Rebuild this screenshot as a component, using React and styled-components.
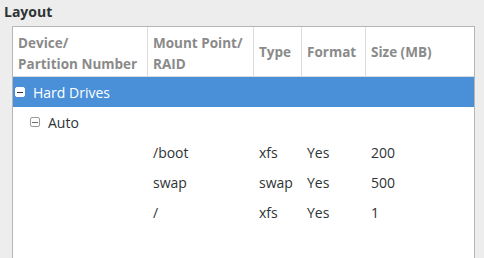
import React from 'react'
import styled, { createGlobalStyle } from 'styled-components'

const GlobalStyle = createGlobalStyle`
  html, body {
    margin: 0;
    padding: 0;
    background: #ededed;
    font-family: "Open Sans", "DejaVu Sans", sans-serif;
    color: #2e3436;
  }
`

const Page = styled.div`
  width: 484px;
  height: 258px;
  overflow: hidden;
  display: flex;
  flex-direction: column;
`

const Title = styled.div`
  font-weight: bold;
  font-size: 14px;
  line-height: 19px;
  padding: 2px 0 0 4px;
  height: 26px;
  box-sizing: border-box;
`

const Panel = styled.div`
  margin-left: 12px;
  width: 463px;
  flex: 1;
  background: #fff;
  border: 1px solid #b6b6b6;
  border-bottom: none;
  box-sizing: border-box;
`

const Grid = styled.div`
  display: grid;
  grid-template-columns: 135px 106px 48px 64px 1fr;
`

const HeadCell = styled.div`
  font-weight: bold;
  font-size: 13.5px;
  line-height: 21px;
  color: #8a8a8a;
  padding: 6px 0 4px 5px;
  height: 50px;
  box-sizing: border-box;
  border-right: ${p => (p.$last ? 'none' : '1px solid #dcdcdc')};
  border-bottom: 1px solid #dcdcdc;
  display: flex;
  flex-direction: column;
  justify-content: ${p => (p.$single ? 'center' : 'flex-start')};
  white-space: nowrap;
`

const Row = styled.div`
  display: contents;
`

const Cell = styled.div`
  height: 30px;
  font-size: 14px;
  display: flex;
  align-items: center;
  padding-left: ${p => p.$indent ?? 5}px;
  white-space: nowrap;
  background: ${p => (p.$selected ? '#4a90d9' : 'transparent')};
  color: ${p => (p.$selected ? '#fff' : '#2e3436')};
`

const Expander = styled.span`
  width: 10px;
  height: 10px;
  box-sizing: border-box;
  border-radius: 2px;
  margin-right: 8px;
  display: inline-flex;
  align-items: center;
  justify-content: center;
  background: ${p => (p.$filled ? '#fff' : 'transparent')};
  border: 1px solid ${p => (p.$filled ? '#fff' : '#9a9a9a')};
  &::after {
    content: '';
    width: 6px;
    height: 1px;
    background: ${p => (p.$filled ? '#2e3436' : '#6a6a6a')};
  }
`

const rows = [
  { mount: '/boot', type: 'xfs', format: 'Yes', size: '200' },
  { mount: 'swap', type: 'swap', format: 'Yes', size: '500' },
  { mount: '/', type: 'xfs', format: 'Yes', size: '1' },
]

export default function App() {
  return (
    <Page>
      <GlobalStyle />
      <Title>Layout</Title>
      <Panel>
        <Grid>
          <HeadCell>
            <span>Device/</span>
            <span>Partition Number</span>
          </HeadCell>
          <HeadCell>
            <span>Mount Point/</span>
            <span>RAID</span>
          </HeadCell>
          <HeadCell $single>Type</HeadCell>
          <HeadCell $single>Format</HeadCell>
          <HeadCell $single $last>Size (MB)</HeadCell>

          <Row>
            <Cell $selected $indent={2}>
              <Expander $filled />
              Hard Drives
            </Cell>
            <Cell $selected />
            <Cell $selected />
            <Cell $selected />
            <Cell $selected />
          </Row>
          <Row>
            <Cell $indent={17}>
              <Expander />
              Auto
            </Cell>
            <Cell />
            <Cell />
            <Cell />
            <Cell />
          </Row>
          {rows.map(r => (
            <Row key={r.mount}>
              <Cell />
              <Cell>{r.mount}</Cell>
              <Cell>{r.type}</Cell>
              <Cell>{r.format}</Cell>
              <Cell>{r.size}</Cell>
            </Row>
          ))}
        </Grid>
      </Panel>
    </Page>
  )
}
